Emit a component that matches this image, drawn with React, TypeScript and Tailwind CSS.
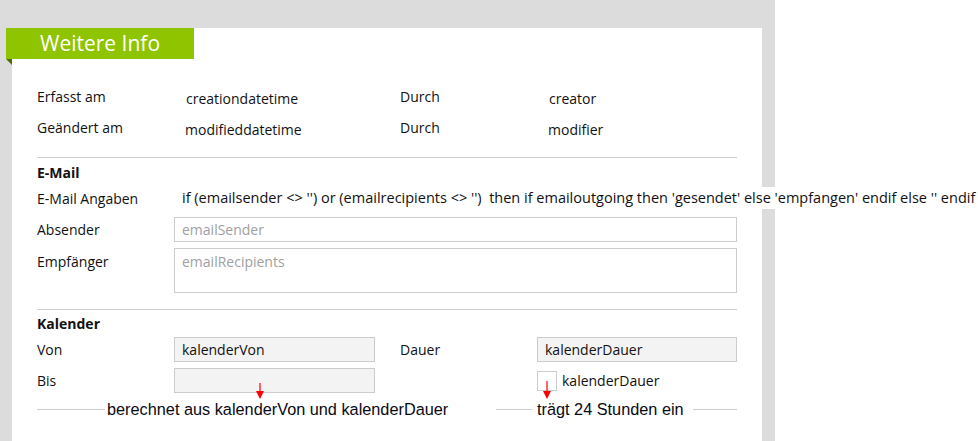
import React from 'react'

const font = { fontFamily: '"Open Sans", "Noto Sans", sans-serif' }

function Arrow({ x, top, height }: { x: number; top: number; height: number }) {
  return (
    <svg
      className="absolute pointer-events-none"
      style={{ left: x - 5, top, width: 10, height }}
      viewBox={`0 0 10 ${height}`}
    >
      <line x1="5" y1="0" x2="5" y2={height - 6} stroke="#ff0000" strokeWidth="1.2" />
      <polygon points={`1,${height - 8} 9,${height - 8} 5,${height}`} fill="#ff0000" />
    </svg>
  )
}

export default function App() {
  return (
    <div className="relative w-[978px] h-[441px] overflow-hidden bg-white text-[14px] text-[#111111]" style={font}>
      <div className="w-[775px] h-[441px] bg-[#dcdcdc] pl-[12px] pt-[10px] pr-[13px]">
        <div className="h-full bg-white px-[25px]">
          {/* ribbon */}
          <div className="relative -ml-[31px] mt-[18px] w-[188px] h-[31px] bg-[#8fc400] flex items-center pl-[34px]">
            <span className="text-white text-[21px] leading-none">Weitere Info</span>
            <div className="absolute left-0 top-full w-0 h-0 border-t-[6px] border-t-[#4f6d00] border-l-[6px] border-l-transparent" />
          </div>

          {/* meta rows */}
          <div className="mt-[22px]">
            {[
              ['Erfasst am', 'creationdatetime', 'creator'],
              ['Geändert am', 'modifieddatetime', 'modifier'],
            ].map(([label, value, by], i) => (
              <div key={label} className="flex items-center h-[31px]">
                <div className="w-[137px]">{label}</div>
                <div className={`w-[226px] pt-[4px] ${i === 0 ? 'pl-[12px]' : 'pl-[11px]'}`}>{value}</div>
                <div className="w-[137px]">Durch</div>
                <div className={`pt-[4px] ${i === 0 ? 'pl-[12px]' : 'pl-[11px]'}`}>{by}</div>
              </div>
            ))}
          </div>

          <div className="mt-[14px] border-t border-[#cccccc]" />

          {/* E-Mail */}
          <div className="h-[28px] flex items-center font-bold">E-Mail</div>
          <div className="h-[24px] flex items-center">
            <div className="w-[145px] shrink-0">E-Mail Angaben</div>
            <span className="relative whitespace-pre bg-white pr-[2px] text-[14.5px]">
              {"if (emailsender <> '') or (emailrecipients <> '')  then if emailoutgoing then 'gesendet' else 'empfangen' endif else '' endif"}
            </span>
          </div>
          <div className="mt-[7px] flex items-center h-[25px]">
            <div className="w-[137px]">Absender</div>
            <div className="flex-1 h-full border border-[#cccccc] bg-white pl-[7px] flex items-center text-[#a0a0a0]">
              emailSender
            </div>
          </div>
          <div className="mt-[6px] flex h-[45px]">
            <div className="w-[137px] pt-[3px]">Empfänger</div>
            <div className="flex-1 h-full border border-[#cccccc] bg-white pl-[7px] pt-[2px] text-[#a0a0a0]">
              emailRecipients
            </div>
          </div>

          <div className="mt-[16px] border-t border-[#cccccc]" />

          {/* Kalender */}
          <div className="relative">
            <div className="h-[27px] flex items-center font-bold">Kalender</div>
            <div className="flex items-center h-[25px]">
              <div className="w-[137px]">Von</div>
              <div className="w-[201px] h-full border border-[#cccccc] bg-[#f3f3f3] pl-[7px] flex items-center">kalenderVon</div>
              <div className="w-[25px]" />
              <div className="w-[137px]">Dauer</div>
              <div className="w-[200px] h-full border border-[#cccccc] bg-[#f3f3f3] pl-[7px] flex items-center">kalenderDauer</div>
            </div>
            <div className="mt-[6px] flex items-center h-[25px]">
              <div className="w-[137px]">Bis</div>
              <div className="w-[201px] h-full border border-[#cccccc] bg-[#f3f3f3]" />
              <div className="w-[25px]" />
              <div className="w-[137px]" />
              <div className="w-[20px] h-[20px] border border-[#cccccc] bg-white" />
              <div className="ml-[5px]">kalenderDauer</div>
            </div>

            {/* annotation */}
            <div
              className="mt-[6px] h-[21px] flex items-center text-[16.3px] text-[#0a0a14]"
              style={{ fontFamily: '"Liberation Sans", Arial, sans-serif' }}
            >
              <div className="w-[459px] flex items-center">
                <div className="w-[68px] border-t border-[#cccccc]" />
                <span className="ml-[2px] whitespace-nowrap">berechnet aus kalenderVon und kalenderDauer</span>
              </div>
              <div className="flex-1 flex items-center">
                <div className="w-[36px] border-t border-[#cccccc]" />
                <span className="ml-[5px] whitespace-nowrap">trägt 24 Stunden ein</span>
                <div className="flex-1 ml-[9px] border-t border-[#cccccc]" />
              </div>
            </div>

            <Arrow x={223} top={73} height={16} />
            <Arrow x={510} top={71} height={18} />
          </div>
        </div>
      </div>
    </div>
  )
}
